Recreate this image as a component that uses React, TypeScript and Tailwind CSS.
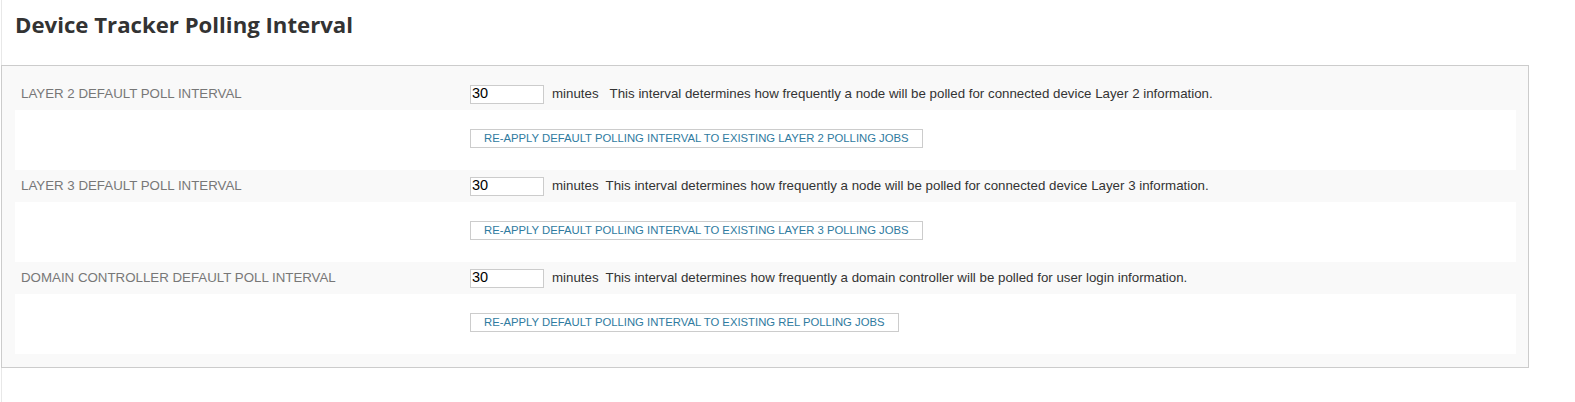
import React from "react";

type Row = {
  label: string;
  value: string;
  desc: string;
  button: string;
  gap: string;
};

const rows: Row[] = [
  {
    label: "LAYER 2 DEFAULT POLL INTERVAL",
    value: "30",
    desc: "This interval determines how frequently a node will be polled for connected device Layer 2 information.",
    button: "RE-APPLY DEFAULT POLLING INTERVAL TO EXISTING LAYER 2 POLLING JOBS",
    gap: "ml-[11px]",
  },
  {
    label: "LAYER 3 DEFAULT POLL INTERVAL",
    value: "30",
    desc: "This interval determines how frequently a node will be polled for connected device Layer 3 information.",
    button: "RE-APPLY DEFAULT POLLING INTERVAL TO EXISTING LAYER 3 POLLING JOBS",
    gap: "ml-[7px]",
  },
  {
    label: "DOMAIN CONTROLLER DEFAULT POLL INTERVAL",
    value: "30",
    desc: "This interval determines how frequently a domain controller will be polled for user login information.",
    button: "RE-APPLY DEFAULT POLLING INTERVAL TO EXISTING REL POLLING JOBS",
    gap: "ml-[7px]",
  },
];

function IntervalRow({ row }: { row: Row }) {
  return (
    <div>
      {/* Setting line */}
      <div className="h-[32px] flex items-center">
        <div className="w-[455px] pl-[6px] text-[13.3px] text-[#777777]">{row.label}</div>
        <input
          type="text"
          defaultValue={row.value}
          className="w-[74px] h-[19px] border border-[#cccccc] bg-white px-[1px] text-[14.5px] text-black outline-none font-['Liberation_Sans',Arial,sans-serif]"
        />
        <span className="ml-[8px] text-[13.3px] text-[#333333]">minutes</span>
        <span className={`${row.gap} text-[13.3px] text-[#333333]`}>{row.desc}</span>
      </div>

      {/* Re-apply block */}
      <div className="h-[60px] bg-white pl-[455px] pt-[19px] flex items-start">
        <button
          type="button"
          className="h-[19px] border border-[#cccccc] bg-white px-[13px] text-[11.3px] leading-none text-[#2f7ba0] font-['Liberation_Sans',Arial,sans-serif]"
        >
          {row.button}
        </button>
      </div>
    </div>
  );
}

export default function App() {
  return (
    <div className="min-h-[402px] bg-white font-['Liberation_Sans',Arial,sans-serif]">
      <div className="min-h-[402px] ml-px border-l border-[#e8e8e8]">
        <div className="h-[65px] pl-[13px] pt-[7px]">
          <h1 className="text-[22.2px] leading-[36px] font-bold text-[#333333] font-['Open_Sans',sans-serif]">
            Device Tracker Polling Interval
          </h1>
        </div>

        <div className="w-[1528px] -ml-px border border-[#cccccc] bg-[#f9f9f9] pt-[12px] pb-[13px] pl-[13px] pr-[12px]">
          {rows.map((r) => (
            <IntervalRow key={r.label} row={r} />
          ))}
        </div>
      </div>
    </div>
  );
}
